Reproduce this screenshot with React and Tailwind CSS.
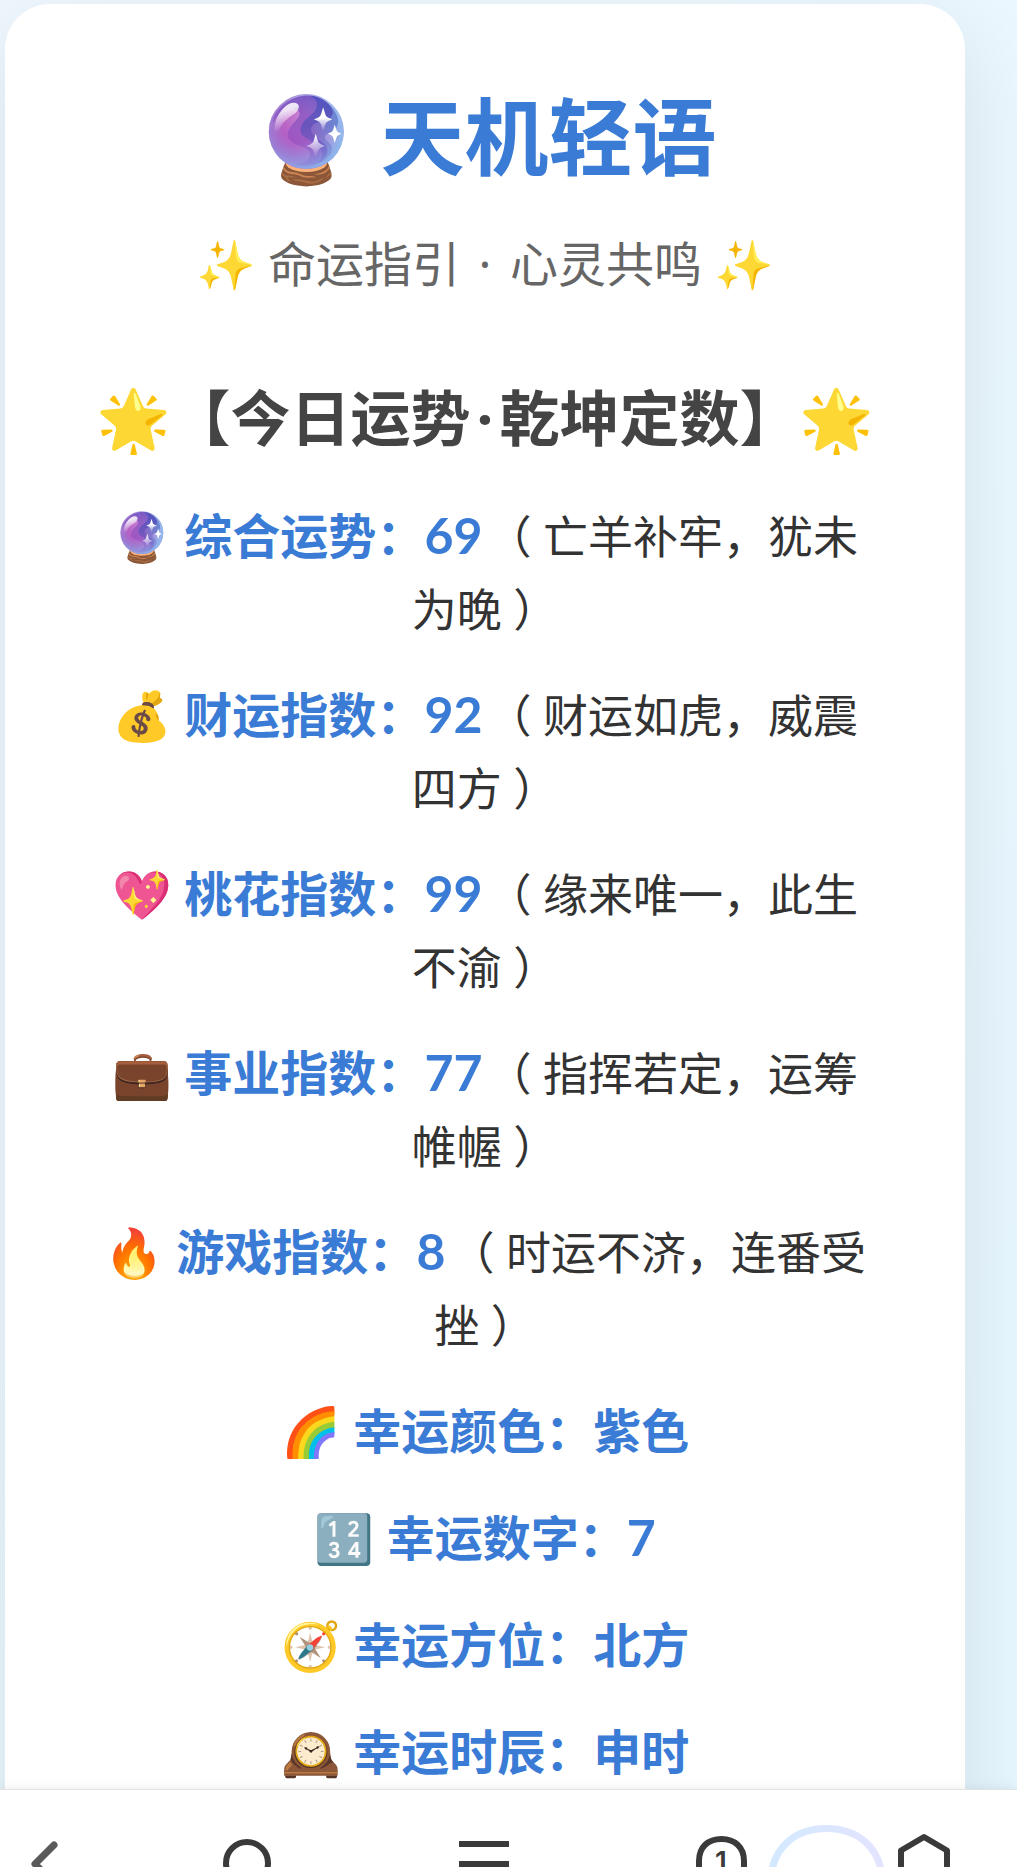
import React from 'react';

const fortunes = [
  { icon: '🔮', label: '综合运势', score: 69, comment: '亡羊补牢，犹未为晚' },
  { icon: '💰', label: '财运指数', score: 92, comment: '财运如虎，威震四方' },
  { icon: '💖', label: '桃花指数', score: 99, comment: '缘来唯一，此生不渝' },
  { icon: '💼', label: '事业指数', score: 77, comment: '指挥若定，运筹帷幄' },
  { icon: '🔥', label: '游戏指数', score: 8, comment: '时运不济，连番受挫' },
];

const luckyItems = [
  { icon: '🌈', label: '幸运颜色', value: '紫色' },
  { icon: '🔢', label: '幸运数字', value: 7 },
  { icon: '🧭', label: '幸运方位', value: '北方' },
  { icon: '🕰️', label: '幸运时辰', value: '申时' },
];

const Highlight = ({ icon, label, value }) => (
  <strong className="text-[48px] leading-[77px] font-bold text-[#3a7bd5]">
    {icon} {label}：
    {typeof value === 'number' ? <span className="font-['Lato',sans-serif] text-[50px]">{value}</span> : value}
  </strong>
);

const Dot = () => <span className="mx-1.5">·</span>;

const BottomNav = () => (
  <nav className="relative z-10 flex h-[78px] shrink-0 items-start overflow-hidden border-t border-[#e2e2e2] bg-white text-[#3a3a3a] shadow-[0_-2px_10px_rgba(0,0,0,0.06)]">
    <button aria-label="后退" className="w-32 shrink-0 pl-7 text-[#5a5a5a]">
      <svg width="40" height="77" viewBox="0 0 40 77" fill="none" stroke="currentColor" strokeWidth="7" strokeLinecap="round" strokeLinejoin="round">
        <path d="M26 55 L7 74 L26 93" />
      </svg>
    </button>
    <button aria-label="搜索" className="flex flex-1 justify-center">
      <svg width="48" height="77" viewBox="0 0 48 77" fill="none" stroke="currentColor" strokeWidth="6">
        <circle cx="24" cy="73" r="21" />
      </svg>
    </button>
    <button aria-label="菜单" className="flex flex-1 justify-center">
      <svg width="50" height="77" viewBox="0 0 50 77" fill="currentColor">
        <path d="M0 51h50v6H0zM0 71h50v6H0z" />
      </svg>
    </button>
    <div className="flex shrink-0 pr-[67px] pl-[94px]">
      <button aria-label="标签页">
        <svg width="51" height="77" viewBox="0 0 51 77" fill="none">
          <path d="M3 90 V71 C3 57 12 49 25.500 49 C38.500 49 48 57 48 71 V90" stroke="currentColor" strokeWidth="6" />
          <text x="25" y="82" textAnchor="middle" fill="currentColor" className="font-['Inter',sans-serif] text-[28px] font-semibold">1</text>
        </svg>
      </button>
      <button aria-label="助手" className="ml-5">
        <svg width="119" height="77" viewBox="0 0 119 77" fill="none">
          <defs>
            <linearGradient id="ring" x1="0" y1="0" x2="1" y2="0">
              <stop offset="0" stopColor="#d3e9ff" />
              <stop offset="1" stopColor="#e3e4ff" />
            </linearGradient>
          </defs>
          <path d="M3.500 88 C7 56 29 38.500 59.500 38.500 C90 38.500 112 56 115.500 88" stroke="url(#ring)" strokeWidth="7" />
        </svg>
      </button>
      <button aria-label="主页" className="ml-3">
        <svg width="52" height="77" viewBox="0 0 52 77" fill="none" stroke="currentColor" strokeWidth="6" strokeLinejoin="round">
          <path d="M3 90 V60.500 L26 47 L49 60.500 V90" />
        </svg>
      </button>
    </div>
  </nav>
);

const App = () => {
  return (
    <div className="flex h-screen flex-col overflow-hidden bg-gradient-to-br from-[#f0f8ff] to-[#e6f7ff] font-['Noto_Sans','Noto_Sans_CJK_SC',sans-serif]">
      <main className="min-h-0 flex-1 overflow-hidden pt-1 pr-[52px] pl-[5px]">
        <div className="min-h-full rounded-[45px] bg-white px-[90px] pt-[73px] pb-24 text-center shadow-[0_24px_90px_rgba(0,0,0,0.1)]">
          <h1 className="text-[84px] leading-[120px] font-bold text-[#3a7bd5]">🔮 天机轻语</h1>
          <p className="mt-7 text-[48px] leading-[77px] text-[#666]">
            ✨ 命运指引 <Dot /> 心灵共鸣 ✨
          </p>

          <h2 className="mt-[68px] text-[60px] leading-[96px] font-bold whitespace-nowrap text-[#444]">
            🌟【今日运势<Dot />乾坤定数】🌟
          </h2>

          <div className="mt-[31px] space-y-[30px] text-[45px] leading-[72px] text-[#333]">
            {fortunes.map((item) => (
              <p key={item.label}>
                <Highlight icon={item.icon} label={item.label} value={item.score} />
                <span className="ml-1">（ {item.comment} ）</span>
              </p>
            ))}
            {luckyItems.map((item) => (
              <p key={item.label}>
                <Highlight icon={item.icon} label={item.label} value={item.value} />
              </p>
            ))}
          </div>
        </div>
      </main>
      <BottomNav />
    </div>
  );
};

export default App;
